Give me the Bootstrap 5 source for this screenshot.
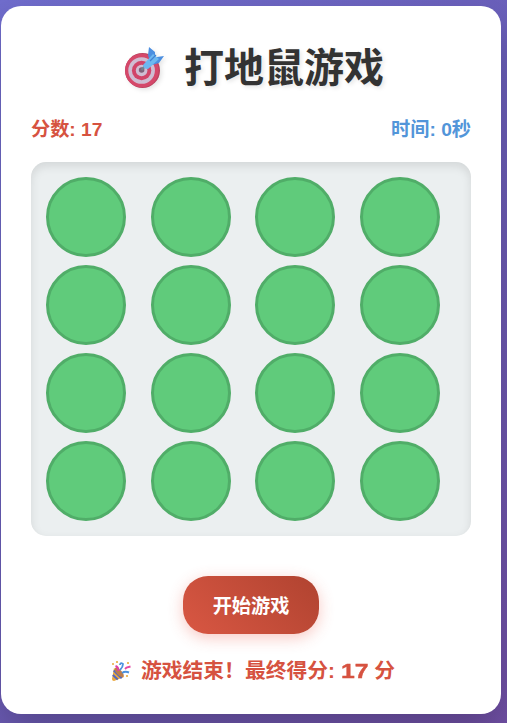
<!DOCTYPE html>
<html lang="zh-CN">
<head>
<meta charset="utf-8">
<meta name="viewport" content="width=device-width, initial-scale=1">
<title>打地鼠游戏</title>
<link href="https://cdn.jsdelivr.net/npm/bootstrap@5.3.0/dist/css/bootstrap.min.css" rel="stylesheet">
<style>
body{font-family:"Liberation Sans","Noto Sans CJK SC",sans-serif;height:723px;overflow:hidden;padding:6px 6px 9px 1px;background:linear-gradient(135deg,#706dcd 0%,#6a5fba 45%,#7150a6 100%)}
.game-panel{width:500px;height:708px;border-radius:20px;padding:30px;box-shadow:0 20px 40px rgba(0,0,0,.22)}
.game-title{font-size:40px;line-height:60px;height:60px;color:#333;text-shadow:2px 2px 4px rgba(0,0,0,.1);gap:18px;margin:2px 0 17px;padding-left:5px}
.game-title svg{width:43px;height:43px;margin-bottom:2px;filter:drop-shadow(2px 2px 2px rgba(0,0,0,.1))}
.game-info{font-size:19.2px;line-height:29px;height:29px;margin-bottom:18px}
.score-text{color:#d65240}
.time-text{color:#5295d9}
.hole-grid{display:grid;grid-template-columns:repeat(4,1fr);gap:8px;padding:15px;border-radius:15px;background:#ebeff0;box-shadow:inset 0 4px 10px rgba(0,0,0,.1)}
.hole{width:80px;height:80px;border:3px solid #50ad68;background:#60cb7b}
.btn-start{width:136px;height:58px;flex:none;border-radius:25px;margin-top:40px;padding:4px 0 0;font-size:19.2px;color:#fff;background:linear-gradient(45deg,#d95743,#b04330);box-shadow:0 4px 15px rgba(231,76,60,.3)}
.result-text{font-size:20.8px;line-height:30px;margin-top:22px;gap:9px;padding-left:3px}
.result-text svg{width:22px;height:22px}
.final-score{display:inline-block;width:27.7px;transform:scaleX(1.19);transform-origin:left;-webkit-text-stroke:.4px currentColor}
</style>
</head>
<body>
<main class="game-panel bg-white d-flex flex-column">
<h1 class="game-title fw-bold d-flex justify-content-center align-items-center">
<svg viewBox="0 0 43 43" aria-hidden="true"><circle cx="19.5" cy="24.5" r="17.5" fill="#b9435f"/><circle cx="18.9" cy="24.5" r="16.8" fill="#d5486a"/><circle cx="18.6" cy="24.5" r="13.3" fill="#cfbdd2"/><circle cx="18.6" cy="24.5" r="9.7" fill="#d14468"/><circle cx="18.6" cy="24.5" r="5.8" fill="#cfbdd2"/><circle cx="18.6" cy="24" r="2.8" fill="#806078"/><path d="M18.5 24 25 17" stroke="#71818e" stroke-width="2.4"/><path d="m25 9 1-8 6 5v7l-5 3zM30 17l4-6 7-1-5 7-7 2z" fill="#4c8fe0"/><path d="M20 19 30 8l6 5-11 10q-5 0-5-4" fill="#6db8f0"/><path d="m27 15 6-6" stroke="#4281d2" stroke-width="1.2"/></svg>
<span>打地鼠游戏</span></h1>
<div class="game-info fw-bold d-flex justify-content-between"><span class="score-text">分数: 17</span><span class="time-text">时间: 0秒</span></div>
<div class="hole-grid">
<div class="hole rounded-circle"></div><div class="hole rounded-circle"></div><div class="hole rounded-circle"></div><div class="hole rounded-circle"></div>
<div class="hole rounded-circle"></div><div class="hole rounded-circle"></div><div class="hole rounded-circle"></div><div class="hole rounded-circle"></div>
<div class="hole rounded-circle"></div><div class="hole rounded-circle"></div><div class="hole rounded-circle"></div><div class="hole rounded-circle"></div>
<div class="hole rounded-circle"></div><div class="hole rounded-circle"></div><div class="hole rounded-circle"></div><div class="hole rounded-circle"></div>
</div>
<button type="button" class="btn btn-start border-0 fw-bold align-self-center">开始游戏</button>
<div class="result-text score-text fw-bold d-flex justify-content-center align-items-center">
<svg viewBox="0 0 22 22" aria-hidden="true"><path d="M4 8 2 19q0 2 2 2l10-4z" fill="#eaa83f"/><path d="m3.7 10.5 8 7.7M2.8 15l5 4.6" stroke="#5568bd" stroke-width="2"/><ellipse cx="9.3" cy="12.5" rx="2.6" ry="6" transform="rotate(-43 9.3 12.5)" fill="#bc7d4c"/><path d="M8.5 11q0-4-3-5" fill="none" stroke="#e142a0" stroke-width="2"/><path d="M10 10q3-3 3-6-3-2-3 1" fill="none" stroke="#4b91df" stroke-width="1.8"/><path d="m15 9 1.5-1.5 4-1" fill="none" stroke="#e44aa5" stroke-width="1.9"/><path d="M12 13q3-2 7-.5" fill="none" stroke="#4b91df" stroke-width="2"/><g fill="#e8ad3d"><circle cx="7" cy="2" r="1.1"/><circle cx="18" cy="3" r="1.1"/><circle cx="17" cy="16" r="1.1"/></g><circle cx="3" cy="4" r="1" fill="#e8ad3d"/></svg>
<span>游戏结束！最终得分: <span class="final-score">17</span> 分</span></div>
</main>
<script src="https://cdn.jsdelivr.net/npm/bootstrap@5.3.0/dist/js/bootstrap.bundle.min.js"></script>
</body>
</html>
